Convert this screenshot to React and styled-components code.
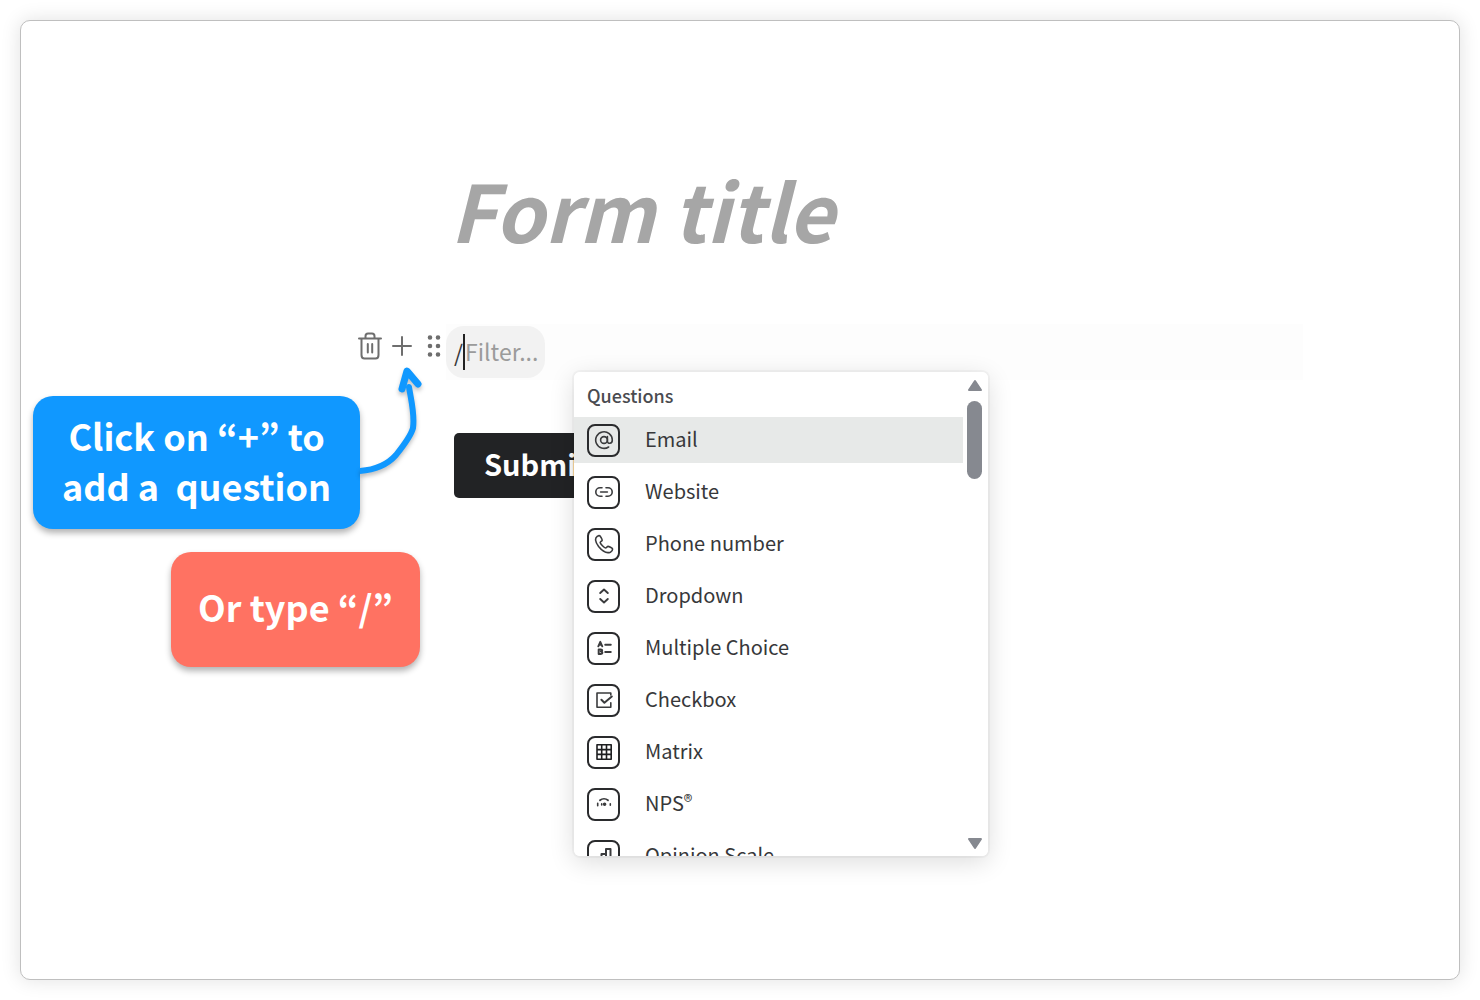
import React from 'react'
import styled, { createGlobalStyle } from 'styled-components'

const GlobalStyle = createGlobalStyle`
  * {
    box-sizing: border-box;
  }
  body {
    margin: 0;
    background: #fff;
    color: #37383a;
    font-family: "Noto Sans CJK KR", "Noto Sans", sans-serif;
  }
  button, input {
    font: inherit;
    color: inherit;
    border: 0;
    background: none;
    padding: 0;
  }
`

const Page = styled.div`
  min-height: 100vh;
  padding: 20px;
  display: flex;
`

const Card = styled.main`
  flex: 1;
  display: grid;
  grid-template-columns: 425px 1fr;
  border: 1px solid #bfbfbf;
  border-radius: 10px;
  background: #fff;
  box-shadow: 0 0 20px rgba(0, 0, 0, 0.12);
`

const Side = styled.div`
  padding-top: 309px;
`

const Tools = styled.div`
  display: flex;
  justify-content: flex-end;
  align-items: center;
  gap: 8px;
  height: 32px;
  padding-right: 4px;
`

const ToolButton = styled.button`
  display: flex;
  color: #6e6e6e;
  svg {
    display: block;
    fill: none;
    stroke: currentColor;
    stroke-width: 2;
    stroke-linecap: round;
    stroke-linejoin: round;
  }
`

const Steps = styled.div`
  display: flex;
  flex-direction: column;
  align-items: flex-start;
  gap: 23px;
  padding: 34px 26px 0 12px;
`

const Callout = styled.div`
  position: relative;
  align-self: ${props => props.$align || 'flex-start'};
  padding: ${props => props.$pad};
  border-radius: 20px;
  background: ${props => props.$color};
  box-shadow: 0 4px 6px rgba(0, 0, 0, 0.3);
  color: #fff;
  font-size: 36px;
  font-weight: 700;
  line-height: 50px;
  text-align: center;
  white-space: nowrap;
`

const Arrow = styled.svg`
  position: absolute;
  left: 100%;
  top: -30px;
  fill: none;
  stroke: #1098ff;
  stroke-width: 6;
  stroke-linecap: round;
  stroke-linejoin: round;
  filter: drop-shadow(0 3px 2px rgba(0, 0, 0, 0.25));
`

const Form = styled.section`
  padding-top: 128px;
`

const Title = styled.h1`
  margin: 0 0 55px 4px;
  color: #a6a6a6;
  font-size: 79px;
  font-style: italic;
  font-weight: 700;
  line-height: 120px;
`

const Block = styled.div`
  position: relative;
  width: calc(100% - 156px);
  height: 56px;
  padding-top: 2px;
  background: #fdfdfd;
`

const Filter = styled.label`
  display: inline-flex;
  align-items: center;
  width: 99px;
  height: 52px;
  padding-left: 8px;
  border-radius: 18px;
  background: #f2f2f2;
  font-size: 23px;
  line-height: 36px;
  input {
    flex: 1;
    min-width: 0;
    height: 36px;
    padding-bottom: 2px;
    outline: 0;
  }
  input::placeholder {
    color: #9b9b9b;
    opacity: 1;
  }
`

const Caret = styled.span`
  width: 2px;
  height: 36px;
  background: #222;
`

const Submit = styled.button`
  display: block;
  height: 65px;
  margin: 53px 0 0 8px;
  padding: 0 30px 6px;
  border-radius: 5px;
  background: #222325;
  color: #fff;
  font-size: 29px;
  font-weight: 700;
  line-height: 40px;
`

const Menu = styled.div`
  position: absolute;
  top: 48px;
  left: 128px;
  z-index: 2;
  display: flex;
  width: 414px;
  height: 484px;
  border-radius: 6px;
  overflow: hidden;
  background: #fff;
`

const MenuShadow = styled.div`
  position: absolute;
  top: 48px;
  left: 128px;
  z-index: 1;
  width: 414px;
  height: 484px;
  border-radius: 6px;
  box-shadow: 0 0 0 2px rgba(0, 0, 0, 0.03), 0 6px 26px rgba(0, 0, 0, 0.14);
`

const Options = styled.div`
  flex: 1;
  h2 {
    margin: 0;
    padding: 9px 13px 8px;
    color: #4a4b50;
    font-size: 18px;
    font-weight: 500;
    line-height: 28px;
  }
`

const Option = styled.button`
  display: flex;
  align-items: center;
  gap: 25px;
  width: 100%;
  height: 46px;
  margin-bottom: 6px;
  padding-left: 13px;
  background: ${props => (props.$active ? '#e7e9e8' : 'transparent')};
  font-size: 20px;
  line-height: 32px;
  text-align: left;
  sup {
    font-size: 18px;
    line-height: 0;
    vertical-align: 3px;
  }
`

const Label = styled.span`
  padding-bottom: 3px;
`

const IconBox = styled.span`
  display: flex;
  align-items: center;
  justify-content: center;
  width: 33px;
  height: 33px;
  border: 2px solid #2a2b2d;
  border-radius: 8px;
  svg {
    fill: none;
    stroke: #3a3b3d;
    stroke-width: 1.6;
    stroke-linecap: round;
    stroke-linejoin: round;
  }
`

const Scrollbar = styled.div`
  display: flex;
  flex-direction: column;
  align-items: center;
  width: 25px;
  padding: 7px 2px 6px 0;
  svg {
    fill: #868990;
    stroke: #868990;
    stroke-width: 2;
    stroke-linejoin: round;
  }
`

const Thumb = styled.div`
  width: 15px;
  height: 78px;
  margin: 10px 0 auto;
  border-radius: 8px;
  background: #868990;
`

const icons = {
  at: (
    <>
      <circle cx="10" cy="10" r="3.4" />
      <path d="M13.4 6.6V11c0 3.2 4.9 3.2 4.9-1A8.3 8.3 0 1 0 14.6 17" />
    </>
  ),
  link: <path d="M8 5.8H6a4.2 4.2 0 0 0 0 8.4h2M12 5.8h2a4.2 4.2 0 0 1 0 8.4h-2M6.6 10h6.8" />,
  phone: (
    <path d="M5.2 1.6 3 2.6C1 4 .8 7.5 4.6 12.6c4 5 8.6 6.8 11.8 5.6 1.4-.7 2.2-1.8 2.2-3.2 0-.8-4-2.8-4.8-2.6-.9.3-1.4 1.6-2.2 1.6-1.4-.1-5.2-4-5.4-5.4 0-.8 1.5-1.3 1.9-2.2C8.4 5.6 6.2 1.4 5.2 1.6Z" />
  ),
  dropdown: <path d="m6.2 7 3.8-3.500L13.8 7M6.2 13l3.8 3.500 3.8-3.500" strokeWidth="1.9" />,
  choice: (
    <>
      <path d="M4.3 8.3 6.3 3.8l2 4.5M5 6.9h2.7M11.2 6.8h5.6M11.2 14h5.6" strokeWidth="1.9" />
      <path d="M4.7 11.6h2.2c1.7 0 1.7 2 0 2 2 0 2 2.3 0 2.3H4.7Z" strokeWidth="2" />
    </>
  ),
  checkbox: (
    <>
      <path d="M16.8 5V3H3v14.2h13.8v-4.5" />
      <path d="m7.4 9.7 3 3L17.8 6.5" strokeWidth="2" />
    </>
  ),
  matrix: (
    <path
      d="M3 2.8h14.2v14.4H3ZM3 7.6h14.2M3 12.4h14.2M7.7 2.8v14.4M12.5 2.8v14.4"
      stroke="#1d1e20"
    />
  ),
  nps: (
    <>
      <path d="M6 6.3c2.3-2 5.7-2 8 0" strokeWidth="1.8" />
      <path d="M3.7 9.2v2.6M16.3 9.8v1.4M7.7 9.9v1" strokeWidth="1.6" />
      <circle cx="10.6" cy="10.2" r="1" fill="#3a3b3d" />
    </>
  ),
  scale: <path d="M3 17v-4.500h4.5V17M7.5 17V8H12v9M12 17V3h4.5v14Z" strokeWidth="2" />
}

const questions = [
  { icon: 'at', label: 'Email' },
  { icon: 'link', label: 'Website' },
  { icon: 'phone', label: 'Phone number' },
  { icon: 'dropdown', label: 'Dropdown' },
  { icon: 'choice', label: 'Multiple Choice' },
  { icon: 'checkbox', label: 'Checkbox' },
  { icon: 'matrix', label: 'Matrix' },
  { icon: 'nps', label: <>NPS<sup>®</sup></> },
  { icon: 'scale', label: 'Opinion Scale' }
]

const QuestionMenu = () => (
  <>
    <MenuShadow />
    <Menu>
      <Options>
        <h2>Questions</h2>
        {questions.map((question, index) => (
          <Option type="button" key={question.icon} $active={index === 0}>
            <IconBox>
              <svg width="20" height="20" viewBox="0 0 20 20">{icons[question.icon]}</svg>
            </IconBox>
            <Label>{question.label}</Label>
          </Option>
        ))}
      </Options>
      <Scrollbar>
        <svg width="16" height="12" viewBox="0 0 16 12"><path d="M8 2 14 11H2Z" /></svg>
        <Thumb />
        <svg width="16" height="12" viewBox="0 0 16 12"><path d="M8 10 14 1H2Z" /></svg>
      </Scrollbar>
    </Menu>
  </>
)

const BlockTools = () => (
  <Tools>
    <ToolButton type="button" aria-label="Delete">
      <svg width="24" height="28" viewBox="0 0 24 28">
        <path d="M1 6.500h22M7.500 6V4.200C7.500 2.600 8.400 1.500 10 1.500h4c1.600 0 2.500 1.100 2.500 2.700V6M3.500 6.500V23c0 2.200 1 3.500 3 3.500h11c2 0 3-1.300 3-3.500V6.500M9.800 12v8.500M14.200 12v8.500" />
      </svg>
    </ToolButton>
    <ToolButton type="button" aria-label="Add">
      <svg width="28" height="28" viewBox="0 0 28 28">
        <path d="M3 14h18M12 5v18" />
      </svg>
    </ToolButton>
    <ToolButton type="button" aria-label="Move">
      <svg width="16" height="28" viewBox="0 0 16 28">
        <path d="M4 5.500h0M12 5.500h0M4 14h0M12 14h0M4 22.500h0M12 22.500h0" strokeWidth="4.600" />
      </svg>
    </ToolButton>
  </Tools>
)

class App extends React.Component {
  render () {
    return (
      <Page>
        <GlobalStyle />
        <Card>
          <Side>
            <BlockTools />
            <Steps>
              <Callout $color="#1098ff" $pad="14px 29px 19px">
                Click on “+” to<br />add a&nbsp; question
                <Arrow width="64" height="112" viewBox="0 0 64 112">
                  <path d="M-1 105C16 104 28 98 36 89C44 79 51 70 53 62C55 48 51 34 49 21" />
                  <path d="M42 23 47 5 58 18" strokeWidth="7" />
                </Arrow>
              </Callout>
              <Callout $color="#ff7262" $pad="29px 27px 36px" $align="flex-end">
                Or type “/”
              </Callout>
            </Steps>
          </Side>
          <Form>
            <Title>Form title</Title>
            <Block>
              <Filter>
                /<Caret />
                <input type="text" placeholder="Filter..." aria-label="Filter questions" />
              </Filter>
              <QuestionMenu />
            </Block>
            <Submit type="button">Submit</Submit>
          </Form>
        </Card>
      </Page>
    )
  }
}

export default App
